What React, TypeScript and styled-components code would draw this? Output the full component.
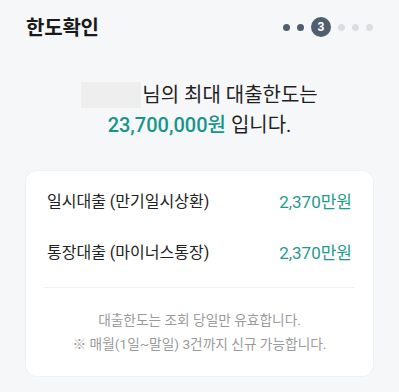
import React from 'react';
import styled, { createGlobalStyle } from 'styled-components';

const GlobalStyle = createGlobalStyle`
  html, body {
    margin: 0;
    padding: 0;
    background: #f6f7f9;
  }
  body {
    font-family: Roboto, "Noto Sans CJK KR", sans-serif;
    color: #1f1f1f;
  }
`;

const Page = styled.div`
  width: 399px;
  height: 392px;
  background: #f6f7f9;
  display: flex;
  flex-direction: column;
  overflow: hidden;
`;

const Header = styled.header`
  height: 52px;
  padding: 0 26px;
  display: flex;
  align-items: center;
  justify-content: space-between;
`;

const Title = styled.h1`
  margin: 0;
  font-size: 20px;
  font-weight: 700;
  color: #1a1a1a;
  letter-spacing: -0.2px;
`;

const Steps = styled.div`
  display: flex;
  align-items: center;
  gap: 7px;
  margin-top: 2px;
`;

const Dot = styled.span<{ done: boolean }>`
  width: 7px;
  height: 7px;
  border-radius: 50%;
  background: ${props => props.done ? '#4f5f6d' : '#dcdde0'};
`;

const Current = styled.span`
  width: 20px;
  height: 20px;
  border-radius: 50%;
  background: #4f5f6d;
  color: #fff;
  font-size: 12px;
  font-weight: 700;
  display: flex;
  align-items: center;
  justify-content: center;
`;

const Summary = styled.div`
  padding-top: 28px;
  text-align: center;
  font-size: 20px;
  line-height: 30px;
  color: #1f1f1f;
`;

const Masked = styled.span`
  display: inline-block;
  width: 60px;
  height: 26px;
  background: #eeeeef;
  vertical-align: middle;
  margin-right: 1px;
  position: relative;
  top: -2px;
`;

const Amount = styled.strong`
  font-weight: 500;
  color: #16968a;
`;

const Card = styled.section`
  margin: 31px 26px 0;
  background: #fff;
  border-radius: 11px;
  box-shadow: 0 0 0 1px #f0f1f3;
`;

const List = styled.div`
  padding: 17px 21px 0;
  display: flex;
  flex-direction: column;
  gap: 27px;
`;

const Row = styled.div`
  display: flex;
  justify-content: space-between;
  align-items: center;
  height: 24px;
`;

const Label = styled.span`
  font-size: 16px;
  color: #222;
`;

const Value = styled.span`
  font-size: 17px;
  color: #1e9a8c;
`;

const Divider = styled.hr`
  margin: 24px 18px 0;
  border: none;
  height: 1px;
  background: #f0f0f0;
`;

const Notice = styled.p`
  margin: 0;
  padding: 20px 0 20px;
  text-align: center;
  font-size: 13.7px;
  line-height: 24px;
  color: #9a9a9a;
`;

const loans = [
  { name: '일시대출 (만기일시상환)', amount: '2,370만원' },
  { name: '통장대출 (마이너스통장)', amount: '2,370만원' },
];

export default function App() {
  const steps = [1, 2, 3, 4, 5, 6];
  return (
    <>
      <GlobalStyle />
      <Page>
        <Header>
          <Title>한도확인</Title>
          <Steps>
            {steps.map(s => s === 3
              ? <Current key={s}>3</Current>
              : <Dot key={s} done={s < 3} />)}
          </Steps>
        </Header>
        <Summary>
          <div><Masked />님의 최대 대출한도는</div>
          <div><Amount>23,700,000원</Amount> 입니다.</div>
        </Summary>
        <Card>
          <List>
            {loans.map(l => (
              <Row key={l.name}>
                <Label>{l.name}</Label>
                <Value>{l.amount}</Value>
              </Row>
            ))}
          </List>
          <Divider />
          <Notice>
            대출한도는 조회 당일만 유효합니다.<br />
            ※ 매월(1일~말일) 3건까지 신규 가능합니다.
          </Notice>
        </Card>
      </Page>
    </>
  );
}
